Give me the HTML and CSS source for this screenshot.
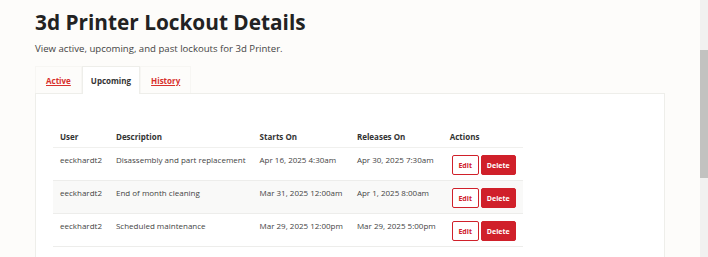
FILE: index.html
```html
<!DOCTYPE html>
<html>
<head>
<meta charset="utf-8">
<link rel="stylesheet" href="styles.css">
</head>
<body>
<div class="page">
  <h1 class="title">3d Printer Lockout Details</h1>
  <p class="subtitle">View active, upcoming, and past lockouts for 3d Printer.</p>
  <div class="tabs">
    <a class="tab" href="#">Active</a>
    <a class="tab tab-current" href="#">Upcoming</a>
    <a class="tab" href="#">History</a>
  </div>
  <div class="panel">
    <table class="lockouts">
      <thead>
        <tr><th>User</th><th>Description</th><th>Starts On</th><th>Releases On</th><th>Actions</th></tr>
      </thead>
      <tbody>
        <tr><td>eeckhardt2</td><td>Disassembly and part replacement</td><td>Apr 16, 2025 4:30am</td><td>Apr 30, 2025 7:30am</td><td class="actions"><button class="btn btn-edit">Edit</button><button class="btn btn-delete">Delete</button></td></tr>
        <tr class="alt"><td>eeckhardt2</td><td>End of month cleaning</td><td>Mar 31, 2025 12:00am</td><td>Apr 1, 2025 8:00am</td><td class="actions"><button class="btn btn-edit">Edit</button><button class="btn btn-delete">Delete</button></td></tr>
        <tr><td>eeckhardt2</td><td>Scheduled maintenance</td><td>Mar 29, 2025 12:00pm</td><td>Mar 29, 2025 5:00pm</td><td class="actions"><button class="btn btn-edit">Edit</button><button class="btn btn-delete">Delete</button></td></tr>
      </tbody>
    </table>
  </div>
</div>
<div class="scrollbar"><div class="thumb"></div></div>
</body>
</html>
```
FILE: styles.css
```css
html, body {
  margin: 0;
  padding: 0;
  background: #fdfcfa;
  overflow: hidden;
  font-family: "Open Sans", "Noto Sans", sans-serif;
  color: #444;
}
.page {
  padding: 8px 43px 0 35px;
}
.title {
  margin: 0;
  font-size: 20.8px;
  line-height: 28px;
  font-weight: 700;
  color: #222;
}
.subtitle {
  margin: 6px 0 0;
  font-size: 9.6px;
  line-height: 14px;
  color: #444;
}
.tabs {
  display: flex;
  margin-top: 10px;
  height: 27px;
}
.tab {
  display: flex;
  align-items: center;
  padding: 0 10px;
  font-size: 8px;
  font-weight: 700;
  color: #d8302c;
  text-decoration: underline;
  border: 1px solid #f7f6f3;
  border-bottom: none;
}
.tab-current {
  color: #333;
  text-decoration: none;
  background: #fff;
  border-color: #eeeeea;
  margin-bottom: -1px;
  padding: 0 8px;
}
.panel {
  background: #fff;
  border: 1px solid #eeeeea;
  padding: 32px 17px 40px;
}
.lockouts {
  border-collapse: collapse;
  font-size: 8px;
}
.lockouts th {
  text-align: left;
  font-weight: 700;
  color: #333;
  padding: 0 7px;
  height: 21px;
  vertical-align: middle;
  border-bottom: 1px solid #f0f0ee;
}
.lockouts td {
  padding: 6px 7px 0 7px;
  vertical-align: top;
  height: 26px;
  line-height: 11px;
  border-bottom: 1px solid #ededeb;
  white-space: nowrap;
}
.lockouts tr.alt td { background: #f9f9f8; }
.lockouts td.actions {
  padding-top: 7px;
  padding-left: 9px;
  padding-right: 7px;
  height: 25px;
}
.btn {
  font-family: inherit;
  font-size: 7px;
  font-weight: 700;
  height: 20px;
  padding: 0;
  border-radius: 2px;
  cursor: pointer;
  vertical-align: top;
}
.btn-edit {
  width: 27px;
  background: #fff;
  color: #d0202a;
  border: 1px solid #d0202a;
  margin-right: 2px;
}
.btn-delete {
  width: 35px;
  background: #d0202a;
  color: #fff;
  border: 1px solid #d0202a;
}
.scrollbar {
  position: fixed;
  top: 0;
  right: 0;
  width: 8px;
  height: 100%;
  background: #f1f1f0;
}
.thumb {
  margin-top: 50px;
  height: 128px;
  background: #c2c2c0;
}
```
